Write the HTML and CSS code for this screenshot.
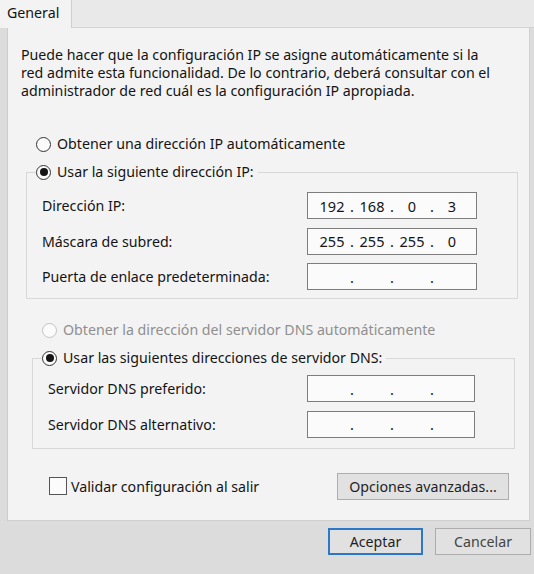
FILE: index.html
```html
<!DOCTYPE html>
<html lang="es">
<head>
<meta charset="utf-8">
<title>Propiedades: Protocolo de Internet versión 4</title>
<link rel="stylesheet" href="styles.css">
</head>
<body>
<div class="tabs">
  <div class="tab">General</div>
  <div class="tab-rest"></div>
</div>
<div class="panel">
  <p class="intro">Puede hacer que la configuración IP se asigne automáticamente si la red admite esta funcionalidad. De lo contrario, deberá consultar con el administrador de red cuál es la configuración IP apropiada.</p>

  <div class="option opt-auto-ip"><span class="radio"></span><span>Obtener una dirección IP automáticamente</span></div>

  <fieldset class="group group-ip">
    <legend class="option"><span class="radio checked"></span><span>Usar la siguiente dirección IP:</span></legend>
    <div class="row">
      <span class="label">Dirección IP:</span>
      <div class="ipbox"><span class="oct">192</span><span class="dot">.</span><span class="oct">168</span><span class="dot">.</span><span class="oct">0</span><span class="dot">.</span><span class="oct">3</span></div>
    </div>
    <div class="row">
      <span class="label">Máscara de subred:</span>
      <div class="ipbox"><span class="oct">255</span><span class="dot">.</span><span class="oct">255</span><span class="dot">.</span><span class="oct">255</span><span class="dot">.</span><span class="oct">0</span></div>
    </div>
    <div class="row">
      <span class="label">Puerta de enlace predeterminada:</span>
      <div class="ipbox"><span class="oct"></span><span class="dot">.</span><span class="oct"></span><span class="dot">.</span><span class="oct"></span><span class="dot">.</span><span class="oct"></span></div>
    </div>
  </fieldset>

  <div class="option opt-auto-dns disabled"><span class="radio"></span><span>Obtener la dirección del servidor DNS automáticamente</span></div>

  <fieldset class="group group-dns">
    <legend class="option"><span class="radio checked"></span><span>Usar las siguientes direcciones de servidor DNS:</span></legend>
    <div class="row">
      <span class="label">Servidor DNS preferido:</span>
      <div class="ipbox"><span class="oct"></span><span class="dot">.</span><span class="oct"></span><span class="dot">.</span><span class="oct"></span><span class="dot">.</span><span class="oct"></span></div>
    </div>
    <div class="row">
      <span class="label">Servidor DNS alternativo:</span>
      <div class="ipbox"><span class="oct"></span><span class="dot">.</span><span class="oct"></span><span class="dot">.</span><span class="oct"></span><span class="dot">.</span><span class="oct"></span></div>
    </div>
  </fieldset>

  <div class="bottom-row">
    <div class="check-opt"><span class="checkbox"></span><span>Validar configuración al salir</span></div>
    <button class="btn btn-adv">Opciones avanzadas...</button>
  </div>
</div>
<div class="footer">
  <button class="btn btn-ok">Aceptar</button>
  <button class="btn btn-cancel">Cancelar</button>
</div>
</body>
</html>
```

FILE: styles.css
```css
* { box-sizing: border-box; }

html, body {
  margin: 0;
  padding: 0;
}

body {
  width: 534px;
  height: 574px;
  overflow: hidden;
  background: #dcdcdc;
  font-family: "Noto Sans", "Open Sans", sans-serif;
  font-size: 14.2px;
  color: #141414;
}

.tabs {
  display: flex;
  height: 28px;
  background: #e9e9e9;
}

.tab {
  width: 72px;
  height: 28px;
  padding-left: 7px;
  line-height: 26px;
  background: #f3f3f3;
  border-right: 1px solid #cfcfcf;
}

.tab-rest {
  flex: 1;
  border-bottom: 1px solid #d2d2d2;
}

.panel {
  margin: 0 4px 0 7px;
  height: 493px;
  background: #f3f3f3;
  border-left: 1px solid #cdcdcd;
  border-right: 1px solid #d0d0d0;
  border-bottom: 1px solid #cfcfcf;
  padding-top: 18px;
  display: flex;
  flex-direction: column;
}

.intro {
  margin: 0 0 0 13px;
  line-height: 18px;
  width: 478px;
}

.option {
  display: flex;
  align-items: center;
  height: 18px;
  line-height: 18px;
  white-space: nowrap;
}

.radio {
  width: 15px;
  height: 15px;
  border: 1px solid #333;
  border-radius: 50%;
  background: #fbfbfb;
  margin-right: 6px;
  display: flex;
  align-items: center;
  justify-content: center;
  flex: none;
}

.radio.checked::after {
  content: "";
  width: 8px;
  height: 8px;
  border-radius: 50%;
  background: #151515;
}

.opt-auto-ip {
  margin: 35px 0 0 28px;
}

.opt-auto-dns {
  margin: 22px 0 0 34px;
}

.disabled { color: #8f8f8f; }
.disabled .radio { border-color: #c2c2c2; }

.group {
  border: 1px solid #d8d8d8;
  margin: 10px 0 0 0;
  padding: 0 0 0 15px;
  min-width: 0;
}

.group legend {
  padding: 0 4px 0 0;
  margin-left: -6px;
}

.group-ip {
  margin-left: 18px;
  margin-right: 11px;
  padding-top: 11px;
  padding-bottom: 8px;
  padding-right: 40px;
}

.group-dns {
  margin-left: 24px;
  margin-right: 14px;
  padding-top: 8px;
  padding-bottom: 10px;
  padding-right: 39px;
}

.row {
  display: flex;
  align-items: center;
  justify-content: space-between;
  height: 27px;
}

.row + .row { margin-top: 8.5px; }

.label { white-space: nowrap; }

.ipbox {
  width: 170px;
  height: 27px;
  border: 1px solid #7d7d7d;
  background: #fbfbfb;
  display: flex;
  align-items: center;
  padding-left: 7px;
}

.group-dns .ipbox { width: 168px; }

.oct {
  width: 34px;
  text-align: center;
  font-size: 14.5px;
}

.dot {
  width: 6px;
  text-align: center;
  font-size: 14.5px;
}

.bottom-row {
  display: flex;
  align-items: center;
  justify-content: space-between;
  margin: 24px 20px 0 41px;
}

.check-opt {
  display: flex;
  align-items: center;
  white-space: nowrap;
}

.checkbox {
  width: 18px;
  height: 18px;
  border: 1px solid #555;
  background: #fbfbfb;
  margin-right: 4px;
}

.btn {
  font-family: inherit;
  font-size: 14.2px;
  color: #1f1f1f;
  height: 27px;
  background: #e1e1e1;
  border: 1px solid #adadad;
  padding: 0;
  margin: 0;
}

.btn-adv { width: 172px; }

.footer {
  display: flex;
  justify-content: flex-end;
  gap: 12px;
  padding: 7px 3px 0 0;
}

.btn-ok {
  width: 95px;
  border: 2px solid #2b78c8;
}

.btn-cancel {
  width: 96px;
  color: #444;
}
```
